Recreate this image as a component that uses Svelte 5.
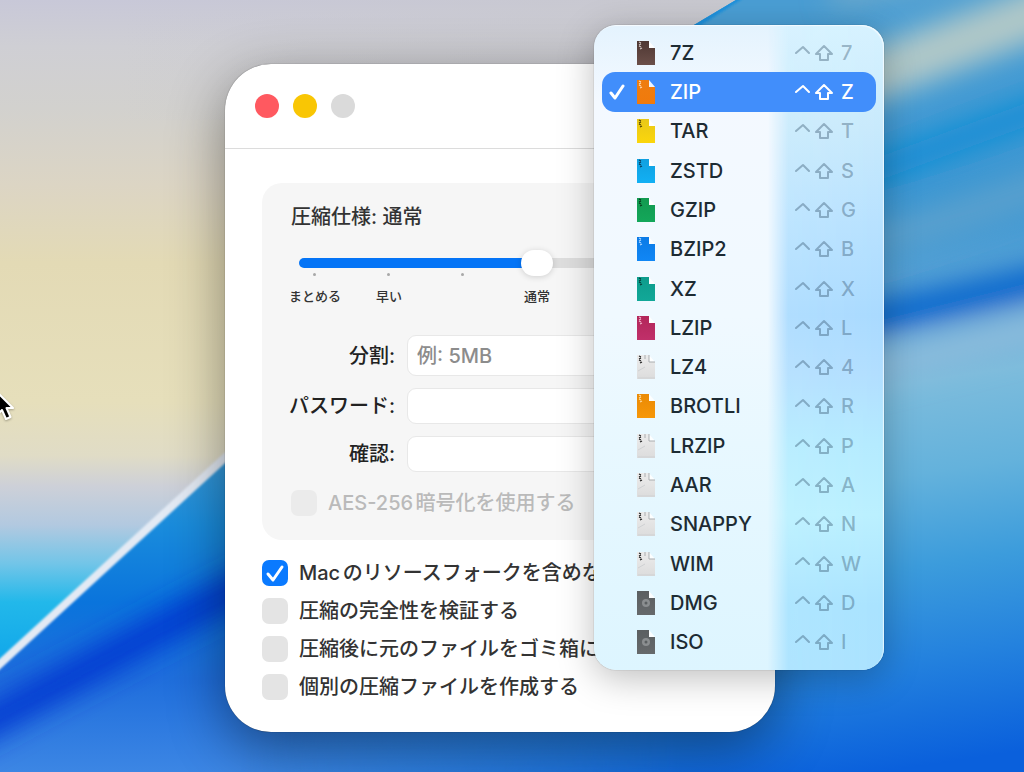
<!--
  Archive settings window with the format menu opened on top of it.

  The window and the menu float freely over the desktop; everything
  inside them is laid out by flow.
-->
<script lang="ts">
  interface Format {
    name: string;
    key: string;
    /** Top and bottom colours of the document icon. */
    from: string;
    to: string;
    teeth: string;
    kind?: 'paper' | 'disk';
  }

  const paper = { from: '#ececec', to: '#dcdcdc', teeth: '#222', kind: 'paper' as const };
  const disk = { from: '#5b5f61', to: '#66696b', teeth: 'none', kind: 'disk' as const };

  const formats: Format[] = [
    { name: '7Z', key: '7', from: '#4e3733', to: '#6b4f49', teeth: '#cfc4c0' },
    { name: 'ZIP', key: 'Z', from: '#ee7d10', to: '#f07a0c', teeth: '#ffd9ae' },
    { name: 'TAR', key: 'T', from: '#e8c818', to: '#fbd60c', teeth: '#4d4208' },
    { name: 'ZSTD', key: 'S', from: '#10a0e0', to: '#12b0f4', teeth: '#0a3c58' },
    { name: 'GZIP', key: 'G', from: '#129a50', to: '#14a75a', teeth: '#063a1d' },
    { name: 'BZIP2', key: 'B', from: '#0b7be6', to: '#1187f5', teeth: '#a9d4ff' },
    { name: 'XZ', key: 'X', from: '#0d9c8c', to: '#12a898', teeth: '#053c37' },
    { name: 'LZIP', key: 'L', from: '#b3265a', to: '#c0306a', teeth: '#f0b4cb' },
    { name: 'LZ4', key: '4', ...paper },
    { name: 'BROTLI', key: 'R', from: '#ea8a05', to: '#f79708', teeth: '#ffdba0' },
    { name: 'LRZIP', key: 'P', ...paper },
    { name: 'AAR', key: 'A', ...paper },
    { name: 'SNAPPY', key: 'N', ...paper },
    { name: 'WIM', key: 'W', ...paper },
    { name: 'DMG', key: 'D', ...disk },
    { name: 'ISO', key: 'I', ...disk },
  ];

  const levels = ['まとめる', '早い', '', '通常', '', ''];

  let selected = $state('ZIP');
  let level = $state(3);
  let split = $state('');
  let password = $state('');
  let confirmation = $state('');
  let options = $state([
    { label: 'Macのリソースフォークを含めない', checked: true },
    { label: '圧縮の完全性を検証する', checked: false },
    { label: '圧縮後に元のファイルをゴミ箱に入れる', checked: false },
    { label: '個別の圧縮ファイルを作成する', checked: false },
  ]);

  const fill = $derived((level / (levels.length - 1)) * 100);
</script>

<main class="desktop">
  <svg class="wallpaper" viewBox="0 0 1024 772" preserveAspectRatio="none" aria-hidden="true">
    <defs>
      <linearGradient id="sky" x1="0" y1="0" x2="0" y2="1">
        <stop offset="0" stop-color="#c8c8d8" />
        <stop offset="0.06" stop-color="#cfcfd4" />
        <stop offset="0.14" stop-color="#d2d1ce" />
        <stop offset="0.24" stop-color="#dcd5c4" />
        <stop offset="0.34" stop-color="#e3dab5" />
        <stop offset="0.52" stop-color="#e6dfbb" />
        <stop offset="0.59" stop-color="#e0dcc6" />
        <stop offset="0.63" stop-color="#cdd0d8" />
        <stop offset="0.68" stop-color="#b2c9e0" />
        <stop offset="0.73" stop-color="#72c5e8" />
        <stop offset="0.78" stop-color="#22b8ea" />
        <stop offset="0.86" stop-color="#10a6ea" />
      </linearGradient>
      <linearGradient id="haze">
        <stop offset="0" stop-color="#c9c9cf" stop-opacity="0" />
        <stop offset="1" stop-color="#c9c9cf" />
      </linearGradient>
      <linearGradient id="sea-left" x1="0" y1="0" x2="0" y2="1">
        <stop offset="0.58" stop-color="#3b9ad6" />
        <stop offset="0.68" stop-color="#1a8cdc" />
        <stop offset="0.78" stop-color="#0a74dc" />
        <stop offset="0.88" stop-color="#1f6edc" />
        <stop offset="1" stop-color="#3c86e4" />
      </linearGradient>
      <linearGradient id="sea-right" gradientUnits="userSpaceOnUse" x1="900" y1="0" x2="1013" y2="752">
        <stop offset="0" stop-color="#4a9ed4" />
        <stop offset="0.28" stop-color="#3a96d2" />
        <stop offset="0.4" stop-color="#5fa5d6" />
        <stop offset="0.5" stop-color="#7dbcdc" />
        <stop offset="0.62" stop-color="#64b2dc" />
        <stop offset="0.74" stop-color="#3c9cdc" />
        <stop offset="0.86" stop-color="#2482de" />
        <stop offset="1" stop-color="#0a60dc" />
      </linearGradient>
      <linearGradient id="blend">
        <stop offset="0" stop-color="#000" />
        <stop offset="1" stop-color="#fff" />
      </linearGradient>
      <mask id="right-side" maskUnits="userSpaceOnUse" x="240" y="0" width="784" height="772">
        <rect x="240" width="440" height="772" fill="url(#blend)" />
        <rect x="680" width="344" height="772" fill="#fff" />
      </mask>
      <clipPath id="below">
        <path d="M0 666L225 458L694 25L736 0H1024V772H0Z" />
      </clipPath>
      <filter id="soft" x="-30%" y="-60%" width="160%" height="220%">
        <feGaussianBlur stdDeviation="14" />
      </filter>
      <filter id="edge" x="-20%" y="-20%" width="140%" height="140%">
        <feGaussianBlur stdDeviation="1" />
      </filter>
    </defs>
    <rect width="1024" height="772" fill="url(#sky)" />
    <rect x="120" width="640" height="120" fill="url(#haze)" />
    <g clip-path="url(#below)">
      <rect width="1024" height="772" fill="url(#sea-left)" />
      <rect width="1024" height="772" fill="url(#sea-right)" mask="url(#right-side)" />
      <g fill="none" filter="url(#soft)">
        <path d="M-60 748Q120 650 330 540" stroke="#0034d0" stroke-width="30" />
        <path d="M830 -10Q900 -20 980 -50" stroke="#6aa8cc" stroke-width="40" />
        <path d="M820 96Q940 48 1090 -6" stroke="#b0c8c8" stroke-width="52" />
        <path d="M860 176Q960 138 1090 92" stroke="#0a8cd6" stroke-width="24" />
        <path d="M860 246Q960 216 1090 170" stroke="#5aa0ce" stroke-width="34" />
        <path d="M820 328Q940 304 1090 270" stroke="#0560cc" stroke-width="30" />
        <path d="M860 372Q960 348 1090 314" stroke="#8cbcdc" stroke-width="30" />
      </g>
      <path d="M690 28L740 -4" stroke="#1c90dc" stroke-width="7" filter="url(#edge)" />
    </g>
    <path d="M-10 673L240 444" stroke="#e3eaf4" stroke-width="8" filter="url(#edge)" />
  </svg>

  <svg class="cursor" viewBox="0 0 18 32" aria-hidden="true">
    <path
      d="M-6 -2L13 17H6.500L10.500 26L6 28L2 19L-4 25Z"
      fill="#000"
      stroke="#fff"
      stroke-width="2"
      stroke-linejoin="round"
    />
  </svg>

  <section class="window" aria-label="圧縮設定">
    <header>
      <button type="button" class="light close" aria-label="閉じる"></button>
      <button type="button" class="light minimize" aria-label="しまう"></button>
      <button type="button" class="light" aria-label="拡大" disabled></button>
    </header>

    <form class="content" onsubmit={(e) => e.preventDefault()}>
      <div class="panel">
        <label class="heading" for="level">圧縮仕様: 通常</label>
        <div class="slider">
          <input
            id="level"
            type="range"
            min="0"
            max="5"
            step="1"
            bind:value={level}
            style="--fill: {fill}%"
          />
          <div class="ticks">
            {#each levels as _}<i></i>{/each}
          </div>
          <div class="levels">
            {#each levels as text}<span>{text}</span>{/each}
          </div>
        </div>

        <div class="fields">
          <label for="split">分割:</label>
          <input id="split" class="large" type="text" placeholder="例: 5MB" bind:value={split} />
          <label for="password">パスワード:</label>
          <input id="password" type="password" bind:value={password} />
          <label for="confirmation">確認:</label>
          <input id="confirmation" type="password" bind:value={confirmation} />
        </div>

        <label class="option disabled">
          <span class="box"><input type="checkbox" disabled /></span>
          AES-256暗号化を使用する
        </label>
      </div>

      <div class="options">
        {#each options as option}
          <label class="option">
            <span class="box">
              <input type="checkbox" bind:checked={option.checked} />
              {#if option.checked}
                <svg viewBox="0 0 26 26" aria-hidden="true"><path d="M6 14L11 20L20 7" /></svg>
              {/if}
            </span>
            {option.label}
          </label>
        {/each}
      </div>
    </form>
  </section>

  <div class="menu" role="menu" aria-label="圧縮形式">
    {#each formats as format, i}
      <button
        type="button"
        role="menuitemradio"
        aria-checked={selected === format.name}
        class:selected={selected === format.name}
        onclick={() => (selected = format.name)}
      >
        <svg class="mark" viewBox="0 0 16 18" aria-hidden="true">
          {#if selected === format.name}<path d="M2 10L6 15L14 3" />{/if}
        </svg>
        <svg class="file" viewBox="0 0 19 24" aria-hidden="true">
          <defs>
            <linearGradient id="file-{i}" x1="0" y1="0" x2="0" y2="1">
              <stop offset="0" stop-color={format.from} />
              <stop offset="1" stop-color={format.to} />
            </linearGradient>
          </defs>
          <path d="M12 0L18 7H12Z" fill="#fff" opacity="0.9" />
          <path d="M0 0H12V7H18V24H0Z" fill="url(#file-{i})" />
          {#if format.kind === 'disk'}
            <circle cx="9" cy="12" r="4" fill="#8b8e90" />
            <circle cx="9" cy="12" r="1.500" fill="#5b5f61" />
          {:else}
            <path d="M2 1L4 2M4 3L2 4M2 5L4 6M5 7L3 8" stroke={format.teeth} stroke-width="1.200" fill="none" />
          {/if}
          {#if format.kind === 'paper'}
            <path d="M8 0V4M12 0V7H18" stroke="#a9adb0" stroke-width="1" fill="none" />
            <path d="M1 16L8 12M1 23H18" stroke="#cfd1d3" stroke-width="1" fill="none" />
          {/if}
        </svg>
        <span class="name">{format.name}</span>
        <svg class="control" viewBox="0 0 15 24" aria-hidden="true"><path d="M1 12L8 6L14 12" /></svg>
        <svg class="shift" viewBox="0 0 18 24" aria-hidden="true">
          <path d="M9 5L1 13H5V19H13V13H17Z" />
        </svg>
        <kbd>{format.key}</kbd>
      </button>
    {/each}
  </div>
</main>

<style>
  :global(body) {
    margin: 0;
  }

  .desktop {
    position: relative;
    min-height: 100vh;
    overflow: hidden;
    font-family: Inter, 'Noto Sans CJK JP', sans-serif;
    font-size: 20px;
    font-weight: 500;
    line-height: 24px;
    color: #333;
  }

  .wallpaper {
    position: absolute;
    inset: 0;
    width: 100%;
    height: 100%;
  }

  .cursor {
    position: absolute;
    left: 0;
    top: 391px;
    width: 18px;
    height: 32px;
    filter: drop-shadow(0 1px 1px rgba(0, 0, 0, 0.3));
  }

  .window {
    position: absolute;
    z-index: 0;
    left: 225px;
    top: 64px;
    width: min(550px, 76vw);
    border-radius: 46px;
    background: #fff;
    box-shadow:
      0 0 1px rgba(0, 0, 0, 0.6),
      0 16px 56px rgba(0, 0, 0, 0.42);
  }

  header {
    display: flex;
    align-items: center;
    gap: 14px;
    height: 84px;
    padding: 0 30px;
    border-bottom: 1px solid #dcdcdc;
  }
  .light {
    width: 24px;
    height: 24px;
    padding: 0;
    border: 0;
    border-radius: 50%;
    background: #dadada;
  }
  .light.close {
    background: #ff5960;
  }
  .light.minimize {
    background: #f9c604;
  }

  .content {
    padding: 34px 37px 32px;
  }

  .panel {
    padding: 22px 29px 24px;
    border-radius: 20px;
    background: #f6f6f6;
  }
  .heading {
    display: block;
  }

  .slider {
    margin: 21px 8px 0;
  }
  .slider input {
    position: relative;
    z-index: 1;
    display: block;
    width: 100%;
    height: 26px;
    margin: 0;
    background: none;
    appearance: none;
  }
  .slider input::-webkit-slider-runnable-track {
    height: 10px;
    border-radius: 5px;
    background: linear-gradient(to right, #0474f6 var(--fill), #dedede var(--fill));
  }
  .slider input::-webkit-slider-thumb {
    width: 32px;
    height: 26px;
    margin-top: -8px;
    border-radius: 13px;
    background: #fff;
    box-shadow: 0 1px 6px rgba(0, 0, 0, 0.16);
    appearance: none;
  }
  .ticks {
    display: flex;
    justify-content: space-between;
    margin: -3px 14px 0;
  }
  .ticks i {
    width: 3px;
    height: 3px;
    border-radius: 50%;
    background: #a8a8a8;
  }
  .levels {
    display: grid;
    grid-template-columns: repeat(6, 1fr);
    margin: 12px -21px 0;
    min-height: 16px;
    font-size: 13px;
    line-height: 16px;
    text-align: center;
    white-space: nowrap;
  }

  .fields {
    display: grid;
    grid-template-columns: 104px 1fr;
    align-items: center;
    gap: 12px;
    margin-top: 31px;
  }
  .fields label {
    justify-self: end;
    color: #222;
    white-space: nowrap;
  }
  .fields input {
    box-sizing: border-box;
    width: 100%;
    height: 36px;
    padding: 0 9px;
    border: 1px solid #e8e8e8;
    border-radius: 9px;
    background: #fff;
    font: inherit;
    color: inherit;
  }
  .fields input.large {
    height: 41px;
  }
  .fields input::placeholder {
    color: #8c8c8c;
  }

  .options {
    display: flex;
    flex-direction: column;
    gap: 12px;
    margin-top: 20px;
  }
  .option {
    display: flex;
    align-items: center;
    gap: 11px;
    height: 26px;
    white-space: nowrap;
    text-autospace: normal;
  }
  .option.disabled {
    margin-top: 18px;
    color: #bababa;
  }
  .box {
    display: grid;
    flex: none;
  }
  .box input,
  .box svg {
    grid-area: 1 / 1;
    width: 26px;
    height: 26px;
    margin: 0;
  }
  .box input {
    border-radius: 7px;
    background: #e4e4e4;
    appearance: none;
  }
  .box input:disabled {
    background: #ebebeb;
  }
  .box input:checked {
    background: #0a7aff;
  }
  .box svg {
    fill: none;
    stroke: #fff;
    stroke-width: 3;
    stroke-linecap: round;
    stroke-linejoin: round;
    pointer-events: none;
  }

  .menu {
    position: absolute;
    z-index: 1;
    left: 594px;
    top: 25px;
    box-sizing: border-box;
    display: flex;
    flex-direction: column;
    width: 290px;
    min-height: 645px;
    padding: 8px;
    border-radius: 22px;
    background: linear-gradient(to bottom, #e4f3fe 0%, #f4f9ff 12%, #f0f9ff 45%, #e8f8ff 65%, #ddf5ff 100%);
    box-shadow:
      0 0 1px rgba(0, 0, 0, 0.5),
      0 8px 36px rgba(0, 0, 0, 0.26);
    overflow: hidden;
  }
  /* Blue glow where the menu leaves the window behind it. */
  .menu::before {
    content: '';
    position: absolute;
    inset: 0;
    background: linear-gradient(
      to bottom,
      #d6f2ff 0%,
      #c8eafc 16%,
      #b8e2ff 30%,
      #a9daff 45%,
      #b1deff 54%,
      #b4ebff 65%,
      #baf0ff 76%,
      #a9e3ff 90%,
      #aae2ff 100%
    );
    mask-image: linear-gradient(to right, transparent 60%, rgba(0, 0, 0, 0.9) 67%, #000 100%);
  }
  .menu::after {
    content: '';
    position: absolute;
    inset: 0;
    border-radius: inherit;
    box-shadow: inset -1px 1px 1px rgba(255, 255, 255, 0.7);
    pointer-events: none;
  }

  .menu button {
    position: relative;
    display: flex;
    flex: 1 1 39px;
    align-items: center;
    padding: 0 14px 0 7px;
    border: 0;
    border-radius: 13px;
    background: none;
    font: inherit;
    color: #1d2b33;
    text-align: left;
  }
  .menu button.selected {
    background: #418efb;
    color: #fff;
  }
  .mark {
    width: 16px;
    height: 18px;
    margin-right: 12px;
    fill: none;
    stroke: #fff;
    stroke-width: 3;
    stroke-linecap: round;
    stroke-linejoin: round;
  }
  .file {
    width: 19px;
    height: 24px;
    margin-right: 14px;
  }
  .name {
    flex: 1;
  }
  .control,
  .shift,
  kbd {
    color: rgba(40, 70, 95, 0.36);
  }
  .control,
  .shift {
    height: 24px;
    fill: none;
    stroke: currentColor;
    stroke-width: 2;
    stroke-linejoin: round;
    stroke-linecap: round;
  }
  .control {
    width: 15px;
    margin-right: 5px;
  }
  .shift {
    width: 18px;
    margin-right: 8px;
  }
  kbd {
    width: 21px;
    font: inherit;
  }
  .selected .control,
  .selected .shift,
  .selected kbd {
    color: #fff;
  }
</style>
